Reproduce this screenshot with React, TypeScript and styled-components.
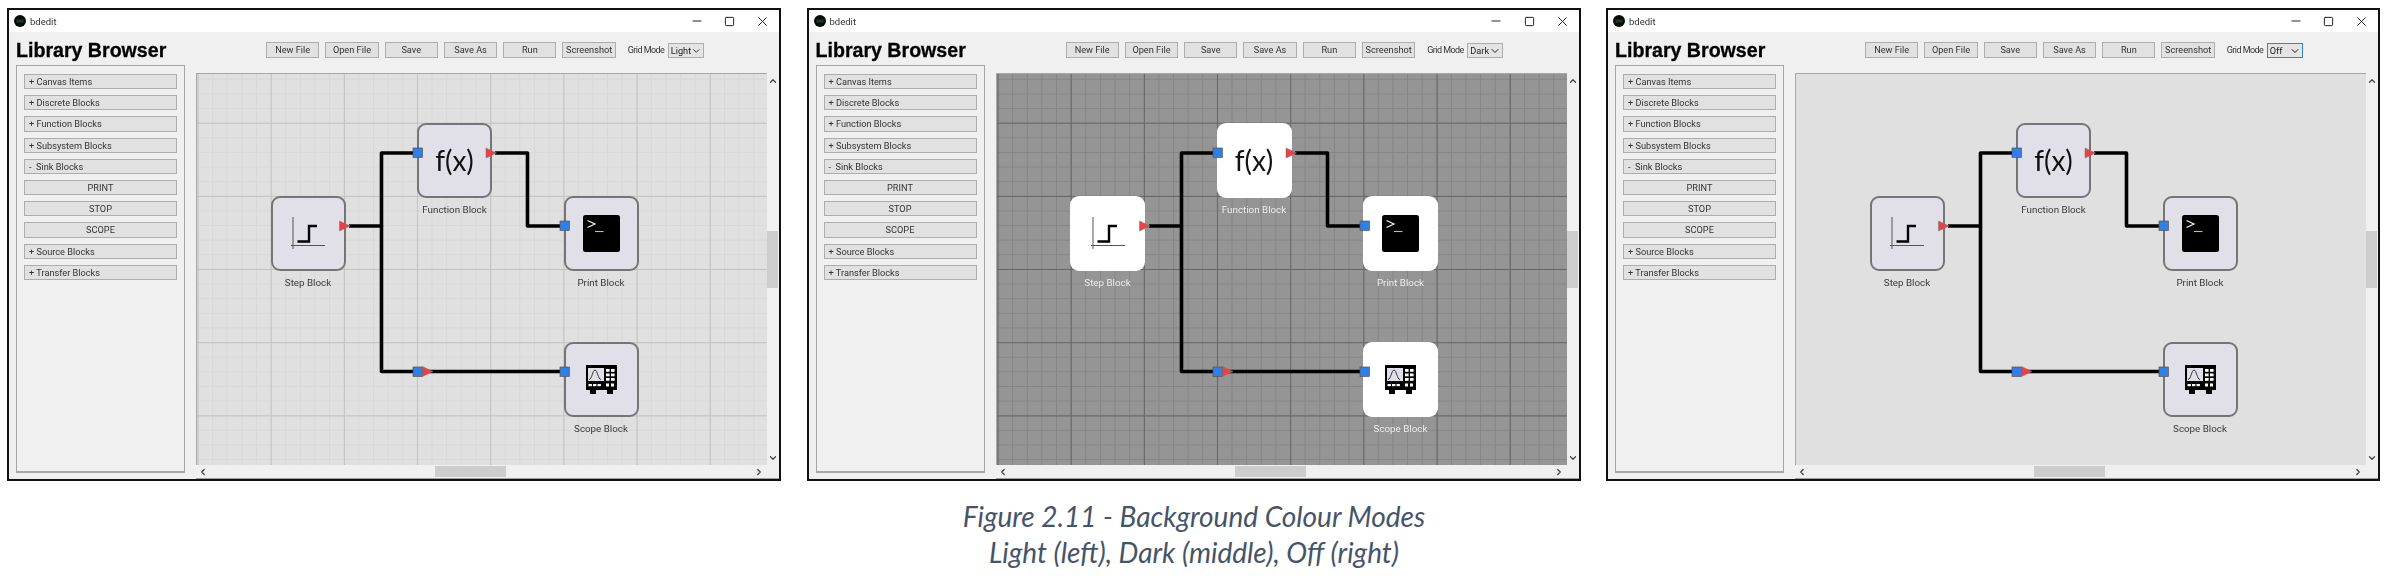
import React from "react";
import styled, { createGlobalStyle, css } from "styled-components";
import { ChevronDown, ChevronLeft, ChevronRight, ChevronUp, Minus, Square, X } from "lucide-react";

type Mode = "Light" | "Dark" | "Off";

// diagram coordinates are the pixels of the first window; the canvas starts here
const ORIGIN_X = 197;
const ORIGIN_Y = 74;

const GlobalStyle = createGlobalStyle`
  html, body {
    margin: 0;
    padding: 0;
    background: #fff;
  }
  * {
    box-sizing: border-box;
  }
`;

const Page = styled.div`
  width: 2388px;
  height: 582px;
  padding-top: 8px;
  overflow: hidden;
  font-family: "Roboto", "Liberation Sans", sans-serif;
`;

const Windows = styled.div`
  display: flex;
  gap: 25.5px;
  padding-left: 7px;
`;

const Win = styled.div`
  width: 774px;
  height: 473px;
  border: 2px solid #111;
  background: #f0f0f0;
  display: flex;
  flex-direction: column;
  filter: blur(0.3px);
`;

const TitleBar = styled.div`
  height: 22px;
  flex: none;
  background: #fff;
  display: flex;
  align-items: center;
  padding-left: 5px;
  color: #333;
  font-size: 9.5px;
`;

const TitleText = styled.span`
  margin-left: 4px;
  flex: 1;
`;

const TitleControl = styled.span`
  width: 33px;
  display: flex;
  justify-content: center;
  color: #222;
`;

const Body = styled.div`
  flex: 1;
  min-height: 0;
  display: flex;
`;

const LeftColumn = styled.div`
  width: 187px;
  flex: none;
  padding: 0 11px 6px 7px;
  display: flex;
  flex-direction: column;
`;

const Heading = styled.h1`
  margin: 0;
  height: 33px;
  padding-top: 6px;
  font-family: "Liberation Sans", Arial, sans-serif;
  font-size: 19.6px;
  line-height: 24px;
  font-weight: 700;
  color: #000;
  white-space: nowrap;
  -webkit-text-stroke: 0.3px #000;
`;

const SidePanel = styled.div`
  flex: 1;
  border: 1px solid #a6a6a6;
  border-bottom-width: 2px;
  padding: 8px 7px;
  display: flex;
  flex-direction: column;
  gap: 5.9px;
`;

const ListButton = styled.div<{ $center?: boolean }>`
  height: 15.3px;
  flex: none;
  background: #e1e1e1;
  border: 1px solid #adadad;
  color: #333;
  font-size: 9.2px;
  line-height: 13px;
  padding-left: 4px;
  white-space: pre;
  ${(p) =>
    p.$center &&
    css`
      padding-left: 0;
      text-align: center;
    `}
`;

const RightColumn = styled.div`
  flex: 1;
  min-width: 0;
  display: flex;
  flex-direction: column;
`;

const Toolbar = styled.div`
  height: 41px;
  flex: none;
  padding: 10px 0 0 70px;
  display: flex;
  align-items: flex-start;
  gap: 6px;
`;

const ToolButton = styled.div`
  width: 53.3px;
  height: 15.5px;
  background: #e1e1e1;
  border: 1px solid #adadad;
  color: #333;
  font-size: 9.2px;
  line-height: 13.5px;
  text-align: center;
`;

const GridLabel = styled.span`
  margin-left: 6px;
  width: 34px;
  font-size: 9px;
  letter-spacing: -0.55px;
  line-height: 17px;
  color: #333;
  white-space: nowrap;
`;

const Combo = styled.div<{ $focused: boolean }>`
  width: 36px;
  height: 15px;
  margin-top: 1px;
  background: #e4e4e4;
  border: 1px solid ${(p) => (p.$focused ? "#2f86d8" : "#adadad")};
  color: #222;
  font-size: 9.2px;
  line-height: 13px;
  padding: 0 1px 0 2px;
  display: flex;
  align-items: center;
  justify-content: space-between;
`;

const ScrollGrid = styled.div`
  flex: 1;
  min-height: 0;
  display: grid;
  grid-template-columns: 1fr 12px;
  grid-template-rows: 1fr 13px;
  border-bottom: 1px solid #a0a0a0;
`;

const modeColours = {
  Light: { bg: "#e0e0e0", major: "#c2c2c2", minor: "#d8d8d8" },
  Dark: { bg: "#959595", major: "#666666", minor: "#858585" },
  Off: { bg: "#e0e0e0", major: "transparent", minor: "transparent" },
};

const Canvas = styled.div<{ $mode: Mode }>`
  position: relative;
  overflow: hidden;
  border-top: 1px solid #a8a8a8;
  border-left: 1px solid #a8a8a8;
  background-color: ${(p) => modeColours[p.$mode].bg};
  background-image:
    linear-gradient(to right, ${(p) => modeColours[p.$mode].major} 1.4px, transparent 1.4px),
    linear-gradient(to bottom, ${(p) => modeColours[p.$mode].major} 1.4px, transparent 1.4px),
    linear-gradient(to right, ${(p) => modeColours[p.$mode].minor} 1.2px, transparent 1.2px),
    linear-gradient(to bottom, ${(p) => modeColours[p.$mode].minor} 1.2px, transparent 1.2px);
  background-size:
    73.2px 100%,
    100% 73.2px,
    14.64px 100%,
    100% 14.64px;
  background-position:
    0.5px 0,
    0 48.7px,
    0.5px 0,
    0 4.8px;
`;

const Node = styled.div<{ $x: number; $y: number }>`
  position: absolute;
  left: ${(p) => p.$x - ORIGIN_X}px;
  top: ${(p) => p.$y - ORIGIN_Y}px;
  width: 75px;
  display: flex;
  flex-direction: column;
  align-items: center;
`;

const BlockBox = styled.div<{ $mode: Mode }>`
  width: 75px;
  height: 75px;
  border-radius: 9px;
  display: flex;
  align-items: center;
  justify-content: center;
  ${(p) =>
    p.$mode === "Dark"
      ? css`
          background: #fff;
        `
      : css`
          background: #e1e0e9;
          border: 2px solid #757575;
        `}
`;

const BlockLabel = styled.div<{ $mode: Mode }>`
  margin-top: 5px;
  font-size: 9.8px;
  line-height: 14px;
  white-space: nowrap;
  color: ${(p) => (p.$mode === "Dark" ? "#eeeeee" : "#3a3a3a")};
`;

const FxText = styled.span`
  font-family: "Lato", sans-serif;
  font-size: 28px;
  line-height: 30px;
  color: #111;
`;

const WireLayer = styled.svg`
  position: absolute;
  left: 0;
  top: 0;
`;

const VTrack = styled.div`
  position: relative;
  background: #f0f0f0;
`;

const VThumb = styled.div`
  position: absolute;
  top: 158px;
  left: 0;
  width: 11px;
  height: 57px;
  background: #cdcdcd;
`;

const HTrack = styled.div`
  position: relative;
  background: #f0f0f0;
  grid-column: 1 / 2;
`;

const HThumb = styled.div`
  position: absolute;
  left: 239px;
  top: 1px;
  width: 71px;
  height: 11px;
  background: #cdcdcd;
`;

const ArrowSlot = styled.span<{ $side: "top" | "bottom" | "left" | "right" }>`
  position: absolute;
  display: flex;
  color: #444;
  ${(p) => p.$side === "top" && "top: 3px; left: 1px;"}
  ${(p) => p.$side === "bottom" && "bottom: 2px; left: 1px;"}
  ${(p) => p.$side === "left" && "left: 2px; top: 2px;"}
  ${(p) => p.$side === "right" && "right: 3px; top: 2px;"}
`;

const Caption = styled.div`
  margin-top: 17px;
  text-align: center;
  font-family: "Lato", "Open Sans", sans-serif;
  font-style: italic;
  font-size: 28px;
  line-height: 36px;
  color: #44546a;
`;

const AppIcon = () => (
  <svg width="12" height="12" viewBox="0 0 12 12">
    <circle cx="6" cy="6" r="6" fill="#0a0a0a" />
    <rect x="2.5" y="4.5" width="7" height="3" fill="#1d3a24" />
  </svg>
);

const StepIcon = () => (
  <svg width="36" height="34" viewBox="0 0 36 34">
    <path d="M3 1V33M1 29.5H35" stroke="#555" strokeWidth="1" fill="none" />
    <path d="M7.5 25.5H19V10H27" stroke="#000" strokeWidth="2.4" fill="none" />
  </svg>
);

const TerminalIcon = () => (
  <svg width="37" height="37" viewBox="0 0 37 37">
    <rect width="37" height="37" rx="2.5" fill="#000" />
    <path d="M4.5 5.5L12 9L4.5 12.5" stroke="#fff" strokeWidth="1.1" fill="none" />
    <path d="M12 16.5H20.5" stroke="#bbb" strokeWidth="1.1" fill="none" />
  </svg>
);

const ScopeIcon = () => (
  <svg width="31" height="29" viewBox="0 0 31 29">
    <path d="M0 0H31V25H27V29H21V25H10V29H4V25H0Z" fill="#000" />
    <rect x="2" y="3" width="16" height="13" fill="#e1e0e9" />
    <path d="M3 14.5C6 14.5 6.5 5 9 5S12 14.5 15 14.5" stroke="#222" strokeWidth="0.9" fill="none" />
    {[20, 25].map((x) => [4, 8.5, 13].map((y) => <rect key={`${x}-${y}`} x={x} y={y} width="3.6" height="2.8" fill="#fff" />))}
    {[2.5, 7, 11.5].map((x) => (
      <rect key={x} x={x} y="19" width="3.4" height="2.2" fill="#fff" />
    ))}
    {[20, 25].map((x) => (
      <rect key={x} x={x} y="18.5" width="3" height="3" fill="#fff" />
    ))}
  </svg>
);

const blocks = [
  { name: "Step Block", x: 270.5, y: 195.5, icon: <StepIcon /> },
  { name: "Function Block", x: 417, y: 122.5, icon: <FxText>f(x)</FxText> },
  { name: "Print Block", x: 563.5, y: 195.5, icon: <TerminalIcon /> },
  { name: "Scope Block", x: 563.5, y: 341.5, icon: <ScopeIcon /> },
];

const wires = [
  "M349 226H381.5V153H414",
  "M381.5 226V371.5H560",
  "M495 153H527.5V226H561",
];

const inPorts = [
  [413, 148],
  [560, 221],
  [560, 367],
  [413, 367],
];

const outPorts = [
  [339.5, 226],
  [486, 153],
  [422.5, 371.5],
];

function Diagram({ mode }: { mode: Mode }) {
  return (
    <Canvas $mode={mode}>
      {blocks.map((b) => (
        <Node key={b.name} $x={b.x} $y={b.y}>
          <BlockBox $mode={mode}>{b.icon}</BlockBox>
          <BlockLabel $mode={mode}>{b.name}</BlockLabel>
        </Node>
      ))}
      <WireLayer width="570" height="392" viewBox={`${ORIGIN_X} ${ORIGIN_Y} 570 392`}>
        {wires.map((d) => (
          <path key={d} d={d} fill="none" stroke="#000" strokeWidth="3.6" strokeLinejoin="round" />
        ))}
        {inPorts.map(([x, y]) => (
          <rect key={`${x}-${y}`} x={x} y={y} width="9.4" height="9.4" fill="#2f7fe6" stroke="#555" strokeWidth="0.7" />
        ))}
        {outPorts.map(([x, y]) => (
          <path key={`${x}-${y}`} d={`M${x} ${y - 5}L${x + 10.5} ${y}L${x} ${y + 5}Z`} fill="#ee3f46" stroke="#777" strokeWidth="0.5" />
        ))}
      </WireLayer>
    </Canvas>
  );
}

const categories = [
  "+ Canvas Items",
  "+ Discrete Blocks",
  "+ Function Blocks",
  "+ Subsystem Blocks",
  "-  Sink Blocks",
];
const sinkBlocks = ["PRINT", "STOP", "SCOPE"];
const moreCategories = ["+ Source Blocks", "+ Transfer Blocks"];
const toolButtons = ["New File", "Open File", "Save", "Save As", "Run", "Screenshot"];

function BdeditWindow({ mode }: { mode: Mode }) {
  return (
    <Win>
      <TitleBar>
        <AppIcon />
        <TitleText>bdedit</TitleText>
        <TitleControl>
          <Minus size={14} strokeWidth={1} absoluteStrokeWidth />
        </TitleControl>
        <TitleControl>
          <Square size={11} strokeWidth={1} absoluteStrokeWidth />
        </TitleControl>
        <TitleControl>
          <X size={15} strokeWidth={1} absoluteStrokeWidth />
        </TitleControl>
      </TitleBar>
      <Body>
        <LeftColumn>
          <Heading>Library Browser</Heading>
          <SidePanel>
            {categories.map((c) => (
              <ListButton key={c}>{c}</ListButton>
            ))}
            {sinkBlocks.map((c) => (
              <ListButton key={c} $center>
                {c}
              </ListButton>
            ))}
            {moreCategories.map((c) => (
              <ListButton key={c}>{c}</ListButton>
            ))}
          </SidePanel>
        </LeftColumn>
        <RightColumn>
          <Toolbar>
            {toolButtons.map((t) => (
              <ToolButton key={t}>{t}</ToolButton>
            ))}
            <GridLabel>Grid Mode</GridLabel>
            <Combo $focused={mode === "Off"}>
              {mode}
              <ChevronDown size={12} strokeWidth={1} absoluteStrokeWidth />
            </Combo>
          </Toolbar>
          <ScrollGrid>
            <Diagram mode={mode} />
            <VTrack>
              <ArrowSlot $side="top">
                <ChevronUp size={10} strokeWidth={1.3} absoluteStrokeWidth />
              </ArrowSlot>
              <VThumb />
              <ArrowSlot $side="bottom">
                <ChevronDown size={10} strokeWidth={1.3} absoluteStrokeWidth />
              </ArrowSlot>
            </VTrack>
            <HTrack>
              <ArrowSlot $side="left">
                <ChevronLeft size={10} strokeWidth={1.3} absoluteStrokeWidth />
              </ArrowSlot>
              <HThumb />
              <ArrowSlot $side="right">
                <ChevronRight size={10} strokeWidth={1.3} absoluteStrokeWidth />
              </ArrowSlot>
            </HTrack>
            <VTrack />
          </ScrollGrid>
        </RightColumn>
      </Body>
    </Win>
  );
}

export default function App() {
  return (
    <Page>
      <GlobalStyle />
      <Windows>
        <BdeditWindow mode="Light" />
        <BdeditWindow mode="Dark" />
        <BdeditWindow mode="Off" />
      </Windows>
      <Caption>
        Figure 2.11 - Background Colour Modes
        <br />
        Light (left), Dark (middle), Off (right)
      </Caption>
    </Page>
  );
}
